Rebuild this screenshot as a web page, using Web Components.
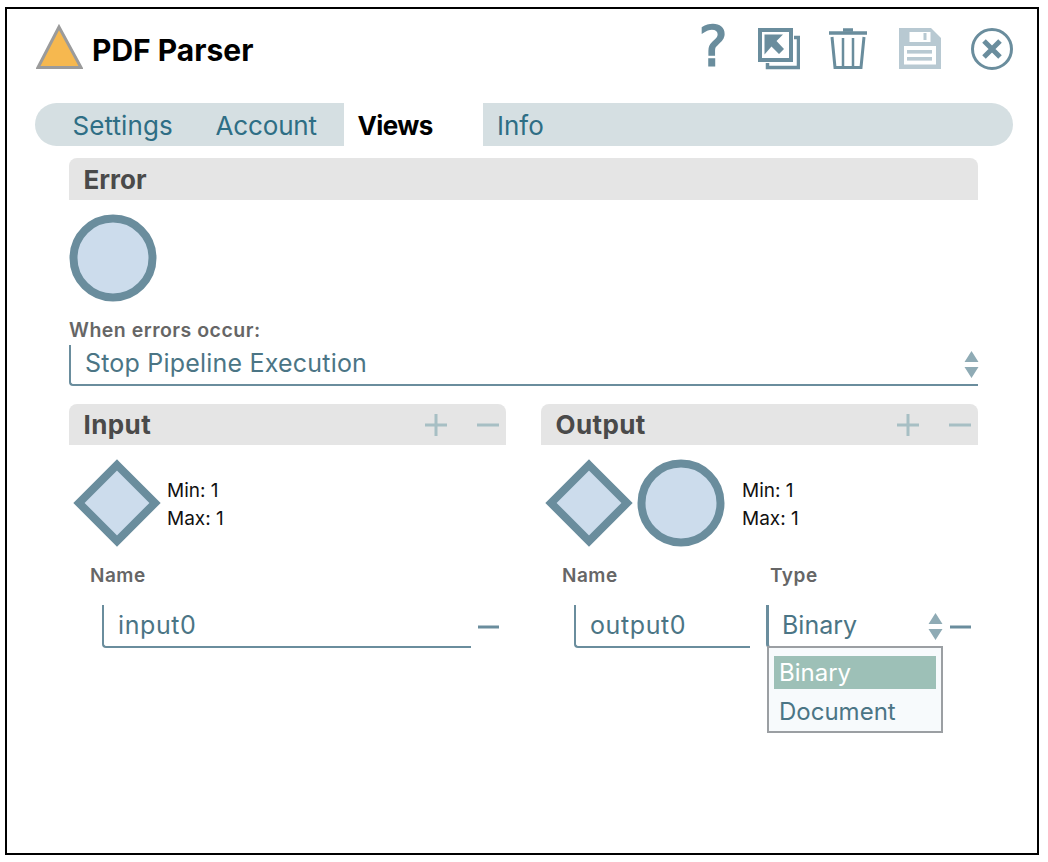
<!DOCTYPE html>
<html>
<head>
<meta charset="utf-8">
<title>PDF Parser</title>
<style>
    html, body { margin: 0; padding: 0; background: #fff; }
    body { font-family: Inter, "Liberation Sans", sans-serif; }
</style>
</head>
<body>
<snap-dialog>
    <snap-header slot="header" title="PDF Parser"></snap-header>
    <snap-tabs slot="tabs"></snap-tabs>

    <section-head>Error</section-head>
    <view-shapes circle></view-shapes>
    <select-field label="When errors occur:" value="Stop Pipeline Execution"></select-field>

    <view-columns>
        <view-panel slot="left" heading="Input">
            <port-row diamond></port-row>
            <input-row></input-row>
        </view-panel>
        <view-panel slot="right" heading="Output">
            <port-row diamond circle wide></port-row>
            <output-row></output-row>
        </view-panel>
    </view-columns>
</snap-dialog>

<script>
const dialogTemplate = document.createElement('template');
dialogTemplate.innerHTML = `
<style>
    :host {
        display: block;
        box-sizing: border-box;
        width: 1034px;
        height: 848px;
        margin: 7px 0 0 5px;
        border: 2px solid #000;
        padding: 15px 24px 0 28px;
        color: #4a4a4a;
    }
    .body {
        display: flex;
        flex-direction: column;
        margin: 12px 35px 0 34px;
    }
</style>
<slot name="header"></slot>
<slot name="tabs"></slot>
<div class="body"><slot></slot></div>
`;

class SnapDialog extends HTMLElement {
    constructor() {
        super();
        this.attachShadow({ mode: 'open' });
        this.shadowRoot.appendChild(dialogTemplate.content.cloneNode(true));
    }
}

const headerTemplate = document.createElement('template');
headerTemplate.innerHTML = `
<style>
    :host {
        display: flex;
        align-items: flex-start;
        height: 79px;
    }
    .logo { display: block; margin: 0 9px 0 1px; }
    h1 {
        margin: 8px 0 0;
        font-size: 30px;
        line-height: 36px;
        font-weight: 700;
        color: #000;
    }
    .actions {
        display: flex;
        align-items: flex-start;
        gap: 29px;
        margin-left: auto;
        padding-top: 4px;
    }
    svg { display: block; }
    .help {
        font: 400 55px/42px "DejaVu Sans", sans-serif;
        -webkit-text-stroke: 1.5px #6a8d9d;
        color: #6a8d9d;
        width: 30px;
        margin: -3px 1px 0 -1px;
        text-align: center;
    }
    .trash { margin-right: 3px; }
    .save { margin-right: 1px; }
</style>
<svg class="logo" width="47" height="46" viewBox="0 0 47 46">
    <path d="M23 3 L2 43.5 H45 Z" fill="#f6b84f" stroke="#9b9b9b" stroke-width="3"/>
</svg>
<h1></h1>
<div class="actions">
    <span class="help">?</span>
    <svg width="42" height="42" viewBox="0 0 42 42" fill="none" stroke="#6a8d9d">
        <rect x="2" y="2" width="31" height="30" stroke-width="4"/>
        <path d="M36 9.5 H40.5 V39.5 H9.5 V35" stroke-width="3.5"/>
        <path d="M6.5 6.5 H25 L18.5 13 L26 21 L21 26 L13.5 18.5 L6.5 26.5 Z" fill="#6a8d9d" stroke="none"/>
    </svg>
    <svg class="trash" width="38" height="42" viewBox="0 0 38 42" fill="none" stroke="#6a8d9d">
        <path d="M0 5 H38" stroke-width="3.5"/>
        <path d="M14 2 H24" stroke-width="3.5"/>
        <path d="M3 9 L6 39.5 H32 L35 9" stroke-width="3"/>
        <path d="M14 10 V39 M24 10 V39" stroke-width="2.5"/>
    </svg>
    <svg class="save" width="42" height="42" viewBox="0 0 42 42">
        <path d="M0 0 H32 L42 10 V41 H0 Z" fill="#b8c9d2"/>
        <rect x="10.5" y="4" width="21" height="10" fill="#fff"/>
        <rect x="24.5" y="5" width="3" height="7" fill="#b8c9d2"/>
        <rect x="5" y="18" width="32" height="18.5" fill="#fff"/>
        <rect x="8" y="22" width="25" height="3.6" fill="#b8c9d2"/>
        <rect x="8" y="29" width="25" height="3.6" fill="#b8c9d2"/>
    </svg>
    <svg width="42" height="42" viewBox="0 0 42 42" fill="none" stroke="#6a8d9d">
        <circle cx="21" cy="21" r="19.5" stroke-width="3"/>
        <path d="M13 13 L29 29 M29 13 L13 29" stroke-width="5"/>
    </svg>
</div>
`;

class SnapHeader extends HTMLElement {
    constructor() {
        super();
        this.attachShadow({ mode: 'open' });
        this.shadowRoot.appendChild(headerTemplate.content.cloneNode(true));
    }

    connectedCallback() {
        this.shadowRoot.querySelector('h1').textContent = this.getAttribute('title');
        this.removeAttribute('title');
    }
}

const tabsTemplate = document.createElement('template');
tabsTemplate.innerHTML = `
<style>
    :host {
        display: flex;
        height: 43px;
        font-size: 26px;
        line-height: 45px;
        color: #2e6e85;
    }
    span { display: block; }
    .lead {
        width: 309px;
        flex: none;
        box-sizing: border-box;
        padding-left: 37.5px;
        background: #d5dfe2;
        border-radius: 22px 0 0 22px;
    }
    .lead span { display: inline-block; }
    .lead span:first-child { width: 143px; letter-spacing: 0.1px; }
    .lead span:last-child { letter-spacing: -0.15px; }
    .active {
        width: 139px;
        flex: none;
        box-sizing: border-box;
        padding-left: 13.5px;
        font-weight: 700;
        color: #000;
        letter-spacing: -0.6px;
    }
    .rest {
        flex: 1;
        padding-left: 14px;
        background: #d5dfe2;
        border-radius: 0 22px 22px 0;
    }
</style>
<div class="lead"><span>Settings</span><span>Account</span></div>
<span class="active">Views</span>
<span class="rest">Info</span>
`;

class SnapTabs extends HTMLElement {
    constructor() {
        super();
        this.attachShadow({ mode: 'open' });
        this.shadowRoot.appendChild(tabsTemplate.content.cloneNode(true));
    }
}

const sectionTemplate = document.createElement('template');
sectionTemplate.innerHTML = `
<style>
    :host {
        display: flex;
        align-items: center;
        box-sizing: border-box;
        height: 42px;
        padding: 0 7px 0 14.5px;
        background: #e5e5e5;
        border-radius: 8px 8px 0 0;
        font-size: 26px;
        font-weight: 700;
        color: #4a4a4a;
    }
    :host([tools]) { height: 41px; letter-spacing: 0.4px; }
    .tools {
        display: none;
        margin-left: auto;
        gap: 30px;
    }
    :host([tools]) .tools { display: flex; }
    svg { display: block; }
</style>
<slot></slot>
<div class="tools">
    <svg width="22" height="22" viewBox="0 0 22 22"><path d="M0 11 H22 M11 0 V22" stroke="#a7bfc4" stroke-width="3"/></svg>
    <svg width="22" height="22" viewBox="0 0 22 22"><path d="M0 11 H22" stroke="#a7bfc4" stroke-width="3"/></svg>
</div>
`;

class SectionHead extends HTMLElement {
    constructor() {
        super();
        this.attachShadow({ mode: 'open' });
        this.shadowRoot.appendChild(sectionTemplate.content.cloneNode(true));
    }
}

const circleSvg = `<svg width="88" height="88" viewBox="0 0 88 88"><circle cx="44" cy="44" r="39.5" fill="#ccdcec" stroke="#6a8d9d" stroke-width="8"/></svg>`;
const diamondSvg = `<svg width="88" height="88" viewBox="0 0 88 88"><path d="M44 6 L82 44 L44 82 L6 44 Z" fill="#ccdcec" stroke="#6a8d9d" stroke-width="8"/></svg>`;

class ViewShapes extends HTMLElement {
    constructor() {
        super();
        this.attachShadow({ mode: 'open' });
        this.shadowRoot.innerHTML = `
<style>
    :host { display: flex; margin-top: 14px; height: 87px; }
    svg { display: block; }
</style>
${circleSvg}`;
    }
}

const updownSvg = `<svg width="15" height="27" viewBox="0 0 15 27"><path d="M7.5 0 L14.5 11 H0.5 Z M0.5 16 H14.5 L7.5 27 Z" fill="#8fabb5"/></svg>`;

class SelectField extends HTMLElement {
    constructor() {
        super();
        this.attachShadow({ mode: 'open' });
    }

    connectedCallback() {
        this.shadowRoot.innerHTML = `
<style>
    :host { display: block; margin-top: 18px; }
    label {
        display: block;
        font-size: 19.5px;
        line-height: 23px;
        font-weight: 600;
        color: #666;
        letter-spacing: 0.5px;
    }
    .box {
        display: flex;
        align-items: center;
        box-sizing: border-box;
        height: 41px;
        margin-top: 3px;
        padding: 0 0 3px 14px;
        border-left: 2px solid #6a8d9d;
        border-bottom: 2px solid #6a8d9d;
        border-bottom-left-radius: 4px;
        font-size: 25px;
        color: #4b7585;
        letter-spacing: 0.2px;
    }
    svg { display: block; margin: 2px -1px 0 auto; }
</style>
<label>${this.getAttribute('label')}</label>
<div class="box"><span>${this.getAttribute('value')}</span>${updownSvg}</div>`;
    }
}

const columnsTemplate = document.createElement('template');
columnsTemplate.innerHTML = `
<style>
    :host {
        display: grid;
        grid-template-columns: 437px 437px;
        column-gap: 35px;
        margin-top: 18px;
    }
</style>
<slot name="left"></slot>
<slot name="right"></slot>
`;

class ViewColumns extends HTMLElement {
    constructor() {
        super();
        this.attachShadow({ mode: 'open' });
        this.shadowRoot.appendChild(columnsTemplate.content.cloneNode(true));
    }
}

class ViewPanel extends HTMLElement {
    constructor() {
        super();
        this.attachShadow({ mode: 'open' });
    }

    connectedCallback() {
        this.shadowRoot.innerHTML = `
<style>
    :host { display: block; }
</style>
<section-head tools>${this.getAttribute('heading')}</section-head>
<slot></slot>`;
    }
}

class PortRow extends HTMLElement {
    constructor() {
        super();
        this.attachShadow({ mode: 'open' });
    }

    connectedCallback() {
        let shapes = '';
        if (this.hasAttribute('diamond')) shapes += diamondSvg;
        if (this.hasAttribute('circle')) shapes += circleSvg;
        this.shadowRoot.innerHTML = `
<style>
    :host {
        display: flex;
        align-items: center;
        margin-top: 14px;
        padding-left: 4px;
        height: 88px;
    }
    .shapes { display: flex; gap: 4px; }
    svg { display: block; }
    .limits {
        margin-left: 6px;
        font-size: 19px;
        line-height: 28px;
        color: #111;
        padding-top: 4px;
    }
    :host([wide]) .limits { margin-left: 17px; }
</style>
<div class="shapes">${shapes}</div>
<div class="limits">Min: 1<br>Max: 1</div>`;
    }
}

const fieldStyles = `
    :host { display: block; margin-top: 17px; }
    .labels, .fields { display: grid; }
    .labels {
        font-size: 19px;
        line-height: 24px;
        font-weight: 600;
        color: #666;
        letter-spacing: 0.5px;
    }
    .fields { margin-top: 17px; align-items: center; }
    .box {
        position: relative;
        display: flex;
        align-items: center;
        box-sizing: border-box;
        height: 43px;
        padding: 0 0 2px 14px;
        border-left: 2px solid #6a8d9d;
        border-bottom: 2px solid #6a8d9d;
        border-bottom-left-radius: 4px;
        font-size: 25px;
        color: #4b7585;
    }
    .name { letter-spacing: 0.6px; }
    .minus { display: block; }
`;
const minusSvg = `<svg class="minus" width="21" height="4" viewBox="0 0 21 4"><path d="M0 2 H21" stroke="#6a8d9d" stroke-width="3"/></svg>`;

class InputRow extends HTMLElement {
    constructor() {
        super();
        this.attachShadow({ mode: 'open' });
        this.shadowRoot.innerHTML = `
<style>
    ${fieldStyles}
    .labels { padding-left: 21px; }
    .fields { grid-template-columns: 369px 21px; column-gap: 7px; padding-left: 33px; }
</style>
<div class="labels">Name</div>
<div class="fields">
    <div class="box name">input0</div>
    ${minusSvg}
</div>`;
    }
}

class OutputRow extends HTMLElement {
    constructor() {
        super();
        this.attachShadow({ mode: 'open' });
        this.shadowRoot.innerHTML = `
<style>
    ${fieldStyles}
    .labels { grid-template-columns: 208px 1fr; padding-left: 21px; }
    .fields { grid-template-columns: 176px 176px 21px; column-gap: 0; padding-left: 33px; }
    .type { margin-left: 16px; width: 176px; padding-left: 13px; border-left-width: 3px; }
    .type svg { display: block; position: absolute; right: -1px; top: 8px; }
    .minus { margin-left: 24px; }
    .menu {
        position: absolute;
        left: -2px;
        top: 41px;
        box-sizing: border-box;
        width: 176px;
        height: 87px;
        padding: 8px 5px 0 5px;
        background: #f7fafc;
        border: 2px solid #9b9fa3;
        font-size: 24px;
        line-height: 33px;
        color: #4b7585;
        z-index: 2;
    }
    .menu div { padding-left: 5px; height: 33px; margin-bottom: 6px; }
    .menu .on { background: #9dc0b7; color: #fff; }
</style>
<div class="labels"><span>Name</span><span>Type</span></div>
<div class="fields">
    <div class="box name">output0</div>
    <div class="box type">
        Binary
        ${updownSvg}
        <div class="menu">
            <div class="on">Binary</div>
            <div>Document</div>
        </div>
    </div>
    ${minusSvg}
</div>`;
    }
}

window.customElements.define('snap-dialog', SnapDialog);
window.customElements.define('snap-header', SnapHeader);
window.customElements.define('snap-tabs', SnapTabs);
window.customElements.define('section-head', SectionHead);
window.customElements.define('view-shapes', ViewShapes);
window.customElements.define('select-field', SelectField);
window.customElements.define('view-columns', ViewColumns);
window.customElements.define('view-panel', ViewPanel);
window.customElements.define('port-row', PortRow);
window.customElements.define('input-row', InputRow);
window.customElements.define('output-row', OutputRow);
</script>
</body>
</html>
